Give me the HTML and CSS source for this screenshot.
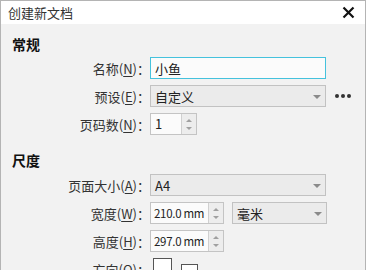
FILE: index.html
```html
<!DOCTYPE html>
<html lang="zh-CN">
<head>
    <meta charset="UTF-8">
    <title>创建新文档</title>
    <link rel="stylesheet" href="styles.css">
</head>
<body>
    <div class="window">
        <div class="titlebar">
            <span class="title">创建新文档</span>
            <svg class="close" width="13" height="13" viewBox="0 0 13 13">
                <path d="M1.5 1.5 L11.5 11.5 M11.5 1.5 L1.5 11.5" stroke="#111" stroke-width="2.2" fill="none"/>
            </svg>
        </div>
        <div class="content">
            <div class="section-title">常规</div>
            <div class="form">
                <div class="row">
                    <label class="label">名称(<u>N</u>)：</label>
                    <div class="field text focus">小鱼</div>
                </div>
                <div class="row">
                    <label class="label">预设(<u>E</u>)：</label>
                    <div class="field select wide">自定义<span class="arrow"></span></div>
                    <span class="dots"><i></i><i></i><i></i></span>
                </div>
                <div class="row">
                    <label class="label">页码数(<u>N</u>)：</label>
                    <div class="spin small">
                        <div class="spin-value">1</div>
                        <div class="spin-btns"><span class="up"></span><span class="down"></span></div>
                    </div>
                </div>
            </div>

            <div class="section-title second">尺度</div>
            <div class="form">
                <div class="row">
                    <label class="label">页面大小(<u>A</u>)：</label>
                    <div class="field select wide">A4<span class="arrow"></span></div>
                </div>
                <div class="row">
                    <label class="label">宽度(<u>W</u>)：</label>
                    <div class="spin">
                        <div class="spin-value">210.0 mm</div>
                        <div class="spin-btns"><span class="up"></span><span class="down"></span></div>
                    </div>
                    <div class="field select unit">毫米<span class="arrow"></span></div>
                </div>
                <div class="row">
                    <label class="label">高度(<u>H</u>)：</label>
                    <div class="spin">
                        <div class="spin-value">297.0 mm</div>
                        <div class="spin-btns"><span class="up"></span><span class="down"></span></div>
                    </div>
                </div>
                <div class="row">
                    <label class="label">方向(<u>O</u>)：</label>
                    <div class="orient">
                        <span class="portrait"></span>
                        <span class="landscape"></span>
                    </div>
                </div>
            </div>
        </div>
    </div>
</body>
</html>
```

FILE: styles.css
```css
body {
    margin: 0;
    font-family: "Noto Sans CJK SC", "Noto Sans", sans-serif;
    font-size: 13px;
    color: #2b2b2b;
    overflow: hidden;
}
.window {
    width: 366px;
    height: 270px;
    box-sizing: border-box;
    border: 1px solid #b4b4b4;
    border-bottom: none;
    background: #f2f2f2;
    overflow: hidden;
}
.titlebar {
    height: 23px;
    background: #fff;
    display: flex;
    align-items: center;
    justify-content: space-between;
    padding: 0 10px 0 7px;
}
.title {
    font-size: 13px;
    color: #333;
    line-height: 23px;
}
.close {
    display: block;
    margin-top: -1px;
}
.content {
    padding: 10px 0 0 11px;
}
.section-title {
    font-weight: bold;
    font-size: 14px;
    line-height: 20px;
    color: #111;
    margin-bottom: 3px;
}
.section-title.second {
    margin-top: 15px;
    margin-bottom: 4px;
}
.form {
    display: flex;
    flex-direction: column;
    gap: 6px;
}
.row {
    display: flex;
    align-items: center;
    height: 22px;
}
.label {
    width: 138px;
    text-align: right;
    white-space: nowrap;
    color: #333;
}
.label u {
    text-decoration-thickness: 1px;
    text-underline-offset: 2px;
}
.field {
    height: 22px;
    box-sizing: border-box;
    display: flex;
    align-items: center;
    padding-left: 4px;
    position: relative;
    color: #222;
}
.text {
    width: 176px;
    background: #fbfbfb;
    border: 1px solid #c4c4c4;
}
.text.focus {
    border-color: #45c2dd;
}
.select {
    background: #ebebeb;
    border: 1px solid #c2c2c2;
}
.select.wide {
    width: 176px;
}
.select.unit {
    width: 95px;
    margin-left: 8px;
}
.arrow {
    position: absolute;
    right: 4px;
    top: 9px;
    border-left: 4px solid transparent;
    border-right: 4px solid transparent;
    border-top: 4px solid #8a8a8a;
}
.dots {
    display: flex;
    gap: 2px;
    margin-left: 9px;
}
.dots i {
    width: 4px;
    height: 4px;
    border-radius: 50%;
    background: #333;
}
.spin {
    display: flex;
    width: 74px;
    height: 22px;
    box-sizing: border-box;
    border: 1px solid #c4c4c4;
    background: #fbfbfb;
}
.spin.small {
    width: 47px;
}
.spin-value {
    flex: 1;
    min-width: 0;
    padding-left: 3px;
    line-height: 20px;
    font-size: 11.5px;
    letter-spacing: -0.3px;
    color: #222;
    white-space: nowrap;
}
.spin.small .spin-value {
    font-size: 13px;
    padding-left: 4px;
}
.spin-btns {
    flex: none;
    width: 14px;
    border-left: 1px solid #d0d0d0;
    background: #ededed;
    display: flex;
    flex-direction: column;
    align-items: center;
    justify-content: center;
    gap: 5px;
}
.spin-btns .up {
    border-left: 3px solid transparent;
    border-right: 3px solid transparent;
    border-bottom: 3px solid #a0a0a0;
}
.spin-btns .down {
    border-left: 3px solid transparent;
    border-right: 3px solid transparent;
    border-top: 3px solid #a0a0a0;
}
.orient {
    display: flex;
    align-items: flex-start;
    align-self: flex-start;
    gap: 9px;
    margin-left: 3px;
}
.portrait {
    width: 17px;
    height: 24px;
    border: 1px solid #555;
    background: #fff;
}
.landscape {
    width: 15px;
    height: 14px;
    margin-top: 6px;
    border: 1px solid #555;
    background: #fff;
}
```
